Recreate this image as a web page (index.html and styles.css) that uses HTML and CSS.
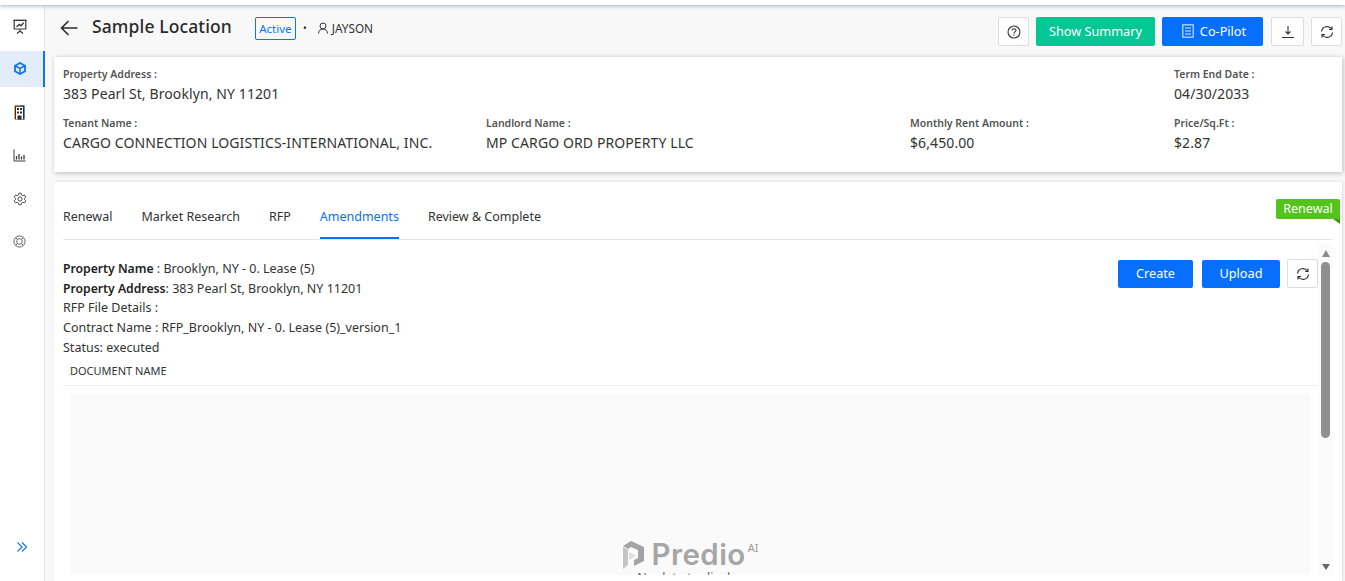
FILE: index.html
```html
<!DOCTYPE html>
<html lang="en">
<head>
<meta charset="utf-8">
<title>Sample Location</title>
<link rel="stylesheet" href="styles.css">
</head>
<body>
<div class="topline"></div>
<div class="app">
  <nav class="side">
    <div class="nav-item">
      <svg width="14" height="15" viewBox="0 0 14 15" fill="none" stroke="#3a3a3a" stroke-width="1.200"><path d="M1.200 1.500h11.600v8.500H1.200z"/><path d="M.5 1.200h13"/><path d="M3.500 7.800l2.800-2.300 1.700 1.300 2.700-3" stroke-width="1.400"/><path d="M7 10v2M4 14.500l3-2.500 3 2.500"/></svg>
    </div>
    <div class="nav-item active">
      <svg width="12" height="13" viewBox="0 0 12 13" fill="none" stroke="#0d74f0" stroke-width="1.800"><path d="M6 1l5 2.800v5.400L6 12 1 9.200V3.800z"/><path d="M1.500 4L6 6.500 10.500 4M6 6.500V12" stroke-width="1.500"/></svg>
    </div>
    <div class="nav-item">
      <svg width="11" height="15" viewBox="0 0 11 15"><rect x=".2" y=".2" width="10.600" height="14.600" rx="1" fill="#e89a3c"/><rect x="5.500" y=".2" width="5.300" height="14.600" rx="1" fill="#3b7ed8"/><rect x="1" y=".8" width="9" height="13.400" fill="#2e2e2e"/><rect x="2" y="1.800" width="7" height="12.400" fill="#fff"/><path d="M3 3h2v2H3zM6 3h2v2H6zM3 6.500h2v2H3zM6 6.500h2v2H6z" fill="#2e2e2e"/><rect x="3.500" y="10.500" width="4" height="4" fill="#2e2e2e"/></svg>
    </div>
    <div class="nav-item">
      <svg width="13" height="13" viewBox="0 0 13 13" fill="none" stroke="#3a3a3a"><path d="M1 .5v11.500H12.500" stroke-width="1"/><path d="M3.500 10.500V7M6 10.500V5M8.500 10.500V7.500M11 10.500V6" stroke-width="1.300"/></svg>
    </div>
    <div class="nav-item">
      <svg width="14" height="14" viewBox="0 0 24 24" fill="none" stroke="#444" stroke-width="1.600"><circle cx="12" cy="12" r="3.500"/><path d="M10 2h4l.6 3 2.400 1.400 2.900-1 2 3.500-2.300 2v2.200l2.300 2-2 3.500-2.900-1-2.400 1.400-.6 3h-4l-.6-3L7 17.600l-2.900 1-2-3.500 2.300-2v-2.200l-2.300-2 2-3.500 2.900 1L9.400 5z"/></svg>
    </div>
    <div class="nav-item">
      <svg width="13" height="13" viewBox="0 0 14 14" fill="none" stroke="#555" stroke-width="1"><circle cx="7" cy="7" r="6"/><rect x="4.200" y="4.200" width="5.600" height="5.600" rx="1.800"/><path d="M3 3l1.500 1.500M11 3L9.500 4.500M3 11l1.500-1.500M11 11L9.500 9.500"/></svg>
    </div>
    <div class="expand">
      <svg width="12" height="12" viewBox="0 0 12 12" fill="none" stroke="#0d74f0" stroke-width="1.100"><path d="M1.500 1.500L6 6l-4.500 4.500M6 1.500L10.500 6 6 10.500"/></svg>
    </div>
  </nav>

  <main class="main">
    <header class="head">
      <svg class="back" width="18" height="16" viewBox="0 0 18 16" fill="none" stroke="#2b2b2b" stroke-width="1.600"><path d="M17.500 8H1.500M8.500 1L1.500 8l7 7"/></svg>
      <h1 class="title">Sample Location</h1>
      <span class="badge">Active</span>
      <span class="dot">•</span>
      <span class="owner">
        <svg width="12" height="12" viewBox="0 0 12 12" fill="none" stroke="#333"><circle cx="6" cy="4" r="3"/><path d="M1.500 11.500c0-6 9-6 9 0"/></svg>
        JAYSON
      </span>
      <div class="actions">
        <button class="icon-btn btn-help"><svg width="14" height="14" viewBox="0 0 14 14" fill="none" stroke="#333" stroke-width="1.100"><circle cx="7" cy="7" r="6"/><path d="M5.200 5.500c0-2.400 3.700-2.400 3.700-.1 0 1.400-1.900 1.500-1.900 3"/><path d="M7 9.600v1.100"/></svg></button>
        <button class="btn green">Show Summary</button>
        <button class="btn blue copilot"><svg width="12" height="14" viewBox="0 0 12 14" fill="none" stroke="#dce9ff" stroke-width="1.100"><rect x=".8" y=".8" width="10.400" height="12.400"/><path d="M3 4h6M3 7h6M3 10h6"/></svg>Co-Pilot</button>
        <button class="icon-btn btn-down"><svg width="14" height="14" viewBox="0 0 14 14" fill="none" stroke="#333" stroke-width="1.100"><path d="M7 1v8M4.500 6.500L7 9l2.500-2.500M1 12.500h12"/></svg></button>
        <button class="icon-btn btn-sync"><svg width="14" height="14" viewBox="0 0 14 14" fill="none" stroke="#333" stroke-width="1.200"><path d="M1.500 6.500A5.500 5.500 0 0 1 11.500 4M12.500 7.500A5.500 5.500 0 0 1 2.500 10"/><path d="M12 1.500V4.500H9M2 12.500V9.500h3"/></svg></button>
      </div>
    </header>

    <section class="info">
      <div class="info-row">
        <div class="field wide-3"><div class="label">Property Address :</div><div class="value">383 Pearl St, Brooklyn, NY 11201</div></div>
        <div class="field"><div class="label">Term End Date :</div><div class="value">04/30/2033</div></div>
      </div>
      <div class="info-row">
        <div class="field tenant"><div class="label">Tenant Name :</div><div class="value">CARGO CONNECTION LOGISTICS-INTERNATIONAL, INC.</div></div>
        <div class="field landlord"><div class="label">Landlord Name :</div><div class="value">MP CARGO ORD PROPERTY LLC</div></div>
        <div class="field rent"><div class="label">Monthly Rent Amount :</div><div class="value">$6,450.00</div></div>
        <div class="field"><div class="label">Price/Sq.Ft :</div><div class="value">$2.87</div></div>
      </div>
    </section>

    <section class="panel">
      <div class="ribbon">Renewal</div>
      <div class="tabs">
        <span class="tab">Renewal</span>
        <span class="tab">Market Research</span>
        <span class="tab">RFP</span>
        <span class="tab current">Amendments</span>
        <span class="tab">Review &amp; Complete</span>
      </div>
      <div class="scroll-area">
        <div class="content">
          <div class="details-row">
            <div class="details">
              <p><b>Property Name</b> : Brooklyn, NY - 0. Lease (5)</p>
              <p><b>Property Address</b>: 383 Pearl St, Brooklyn, NY 11201</p>
              <p>RFP File Details :</p>
              <p>Contract Name : RFP_Brooklyn, NY - 0. Lease (5)_version_1</p>
              <p>Status: executed</p>
            </div>
            <div class="content-actions">
              <button class="btn blue create">Create</button>
              <button class="btn blue upload">Upload</button>
              <button class="icon-btn small-sync"><svg width="14" height="14" viewBox="0 0 14 14" fill="none" stroke="#333" stroke-width="1.200"><path d="M1.500 6.500A5.500 5.500 0 0 1 11.500 4M12.500 7.500A5.500 5.500 0 0 1 2.500 10"/><path d="M12 1.500V4.500H9M2 12.500V9.500h3"/></svg></button>
            </div>
          </div>
          <div class="table-head">DOCUMENT NAME</div>
          <div class="empty">
            <div class="logo">
              <svg width="21" height="28" viewBox="0 0 21 28"><path d="M8 0l13 6v14l-10 5v-6l4-2V9L8 6 5 8 0 5z" fill="#a4a4a4"/><path d="M0 6l5 3v15l-5 4z" fill="#c4c4c4"/><path d="M6 11l7 4-7 4z" fill="#dedede"/></svg>
              <span class="logo-text">Predio</span><sup class="logo-ai">AI</sup>
            </div>
            <div class="nodata">No data to display</div>
          </div>
        </div>
        <div class="scrollbar">
          <span class="arrow up"></span>
          <span class="thumb"></span>
          <span class="arrow down"></span>
        </div>
      </div>
    </section>
  </main>
</div>
</body>
</html>
```

FILE: styles.css
```css
* { box-sizing: border-box; }
html, body { margin: 0; height: 581px; overflow: hidden; }
body { font-family: "Noto Sans", "Open Sans", sans-serif; color: #333; background: #f8f8f9; position: relative; }
p, h1 { margin: 0; }
button { font-family: inherit; cursor: pointer; }

.topline { height: 5px; background: #fff; box-shadow: 0 1px 4px rgba(90,110,170,.55); position: relative; z-index: 2; }
.app { display: flex; height: 576px; }

.side { width: 45px; flex: none; background: #fff; border-right: 1px solid #e8e8e8; height: 100%; display: flex; flex-direction: column; position: relative; }
.nav-item { height: 36px; margin-bottom: 7.200px; display: flex; align-items: center; justify-content: center; padding-right: 5px; flex: none; }
.nav-item:first-child { margin-top: 3px; }
.nav-item.active { background: #e3edf9; border-right: 2px solid #0d74f0; padding-right: 3px; margin-right: -1px; padding-bottom: 2px; }
.expand { position: absolute; left: 16px; top: 536px; line-height: 0; }

.main { flex: 1; min-width: 0; padding-left: 9px; padding-right: 3px; }

.head { height: 52px; display: flex; align-items: center; padding-left: 6px; padding-bottom: 3px; }
.back { margin-right: 14px; margin-top: -4px; }
.title { font-size: 17.500px; font-weight: 500; color: #2b2b2b; letter-spacing: .12px; margin-top: -7px; }
.badge { margin-left: 23px; height: 23px; width: 41px; border: 1px solid #0d74f0; border-radius: 2px; font-size: 11.500px; color: #0d74f0; display: flex; align-items: center; justify-content: center; margin-top: -3px; }
.dot { margin-left: 7px; font-size: 10px; margin-top: -3px; }
.owner { margin-left: 10px; font-size: 11.800px; display: flex; align-items: center; gap: 3px; margin-top: -3px; }
.actions { margin-left: auto; display: flex; align-items: center; margin-top: 4px; }

.btn { border: 0; border-radius: 2px; color: #fff; font-size: 12.700px; height: 29px; display: flex; align-items: center; justify-content: center; padding: 0 0 2px; }
.green { background: #03c795; width: 119px; margin-left: 7px; }
.blue { background: #0670fc; }
.copilot { width: 101px; margin-left: 7px; gap: 6px; padding-left: 3px; }
.icon-btn { background: #fff; border: 1px solid #ddd; border-radius: 2px; height: 29px; width: 31px; padding: 0; display: flex; align-items: center; justify-content: center; }
.btn-down { width: 33px; margin-left: 8px; }
.btn-sync { margin-left: 7px; }

.info { background: #fff; height: 115px; box-shadow: 1px 1px 5px rgba(0,0,0,.25); padding: 10px 9px 0; }
.info-row { display: flex; height: 49px; }
.field { min-width: 0; }
.wide-3 { width: 1111px; }
.tenant { width: 423px; }
.landlord { width: 424px; }
.rent { width: 264px; }
.label { font-size: 10.500px; font-weight: 600; color: #555; line-height: 15px; }
.value { font-size: 14px; color: #333; line-height: 20px; margin-top: 2px; letter-spacing: .1px; white-space: nowrap; }

.panel { position: relative; margin-top: 10px; height: 400px; background: #fff; box-shadow: 1px 0 3px rgba(0,0,0,.12); padding: 0 9px; }
.ribbon { position: absolute; right: 2px; top: 17px; width: 64px; height: 20px; background: #54c31c; color: #fff; font-size: 12.500px; line-height: 19px; text-align: center; border-radius: 2px 2px 0 2px; }
.ribbon::after { content: ""; position: absolute; right: 0; bottom: -5px; border-top: 5px solid #3f9a12; border-left: 7px solid transparent; }
.tabs { display: flex; gap: 29px; height: 58px; border-bottom: 1px solid #e8e8e8; padding-top: 24px; }
.tab { font-size: 12.500px; color: #333; height: 33px; line-height: 22px; white-space: nowrap; }
.tab.current { color: #0670fc; border-bottom: 2px solid #0670fc; }

.scroll-area { display: flex; height: 335px; overflow: hidden; }
.content { flex: 1; min-width: 0; }
.details-row { display: flex; justify-content: space-between; padding-top: 19px; }
.details { font-size: 12.500px; line-height: 19.700px; color: #333; }
.details b { font-weight: 600; color: #222; font-size: 12.200px; }
.content-actions { display: flex; align-items: flex-start; padding-top: 1px; }
.create { width: 75px; height: 28px; }
.upload { width: 78px; height: 28px; margin-left: 9px; }
.small-sync { width: 31px; height: 29px; margin-left: 7px; margin-top: -1px; }
.table-head { font-size: 11px; color: #333; padding: 5px 0 0 7px; height: 28px; border-bottom: 1px solid #eee; }
.empty { margin: 7px 7px 0 7px; background: #fafafa; height: 300px; text-align: center; padding-top: 146px; }
.logo { display: flex; align-items: flex-end; justify-content: center; height: 30px; }
.logo-text { font-family: "Inter", sans-serif; font-weight: 600; font-size: 29.500px; line-height: 30px; letter-spacing: .4px; color: #a6a6a6; margin-left: 8px; }
.logo-ai { font-size: 11px; color: #999; line-height: 14px; align-self: flex-start; margin-top: 2px; margin-left: 2px; }
.nodata { font-size: 12.500px; color: #666; margin-top: 0; }

.scrollbar { flex: none; width: 15px; position: relative; height: 331px; display: flex; flex-direction: column; align-items: center; background: #fbfbfb; margin-top: 4px; }
.thumb { width: 9px; height: 176px; background: #8f8f8f; border-radius: 5px; margin-top: 5px; flex: none; }
.arrow { width: 0; height: 0; border-left: 4.500px solid transparent; border-right: 4.500px solid transparent; flex: none; }
.up { border-bottom: 7px solid #8a8a8a; margin-top: 6px; }
.down { position: absolute; top: 320px; border-top: 6px solid #666; }
```
